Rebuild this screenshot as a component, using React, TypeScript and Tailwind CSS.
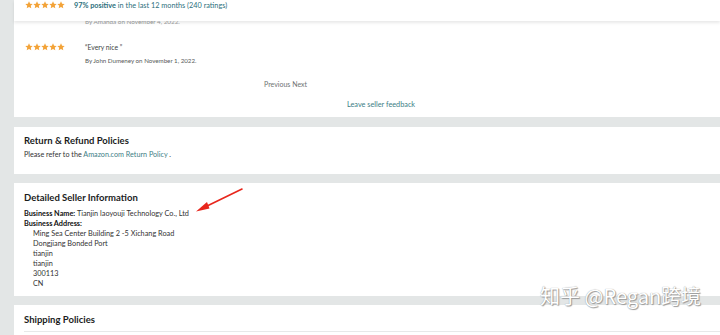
import React from 'react';

const Stars = () => (
    <div className="flex">
        {[0, 1, 2, 3, 4].map(i => (
            <svg key={i} viewBox="0 0 24 24" className="w-[8px] h-[8px]">
                <path
                    d="M12 1l3.3 7.1 7.7.8-5.8 5.2 1.7 7.7L12 17.8l-6.9 4 1.7-7.7L1 8.9l7.7-.8z"
                    fill="#f3a338"
                />
            </svg>
        ))}
    </div>
);

const Card: React.FC<{ className?: string; children: React.ReactNode }> = ({ className, children }) => (
    <div className={`bg-white ${className ?? ''}`}>{children}</div>
);

const address = [
    'Ming Sea Center Building 2 -5 Xichang Road',
    'Dongjiang Bonded Port',
    'tianjin',
    'tianjin',
    '300113',
    'CN',
];

export default function App() {
    return (
        <div
            className="relative w-[720px] h-[335px] overflow-hidden bg-[#e3e6e6] pl-[14px] text-[#0f1111]"
            style={{ fontFamily: 'Lato, "Liberation Sans", sans-serif' }}
        >
            <div className="flex flex-col">
                {/* Feedback card */}
                <Card className="h-[117px] flex flex-col">
                    <div className="relative z-10 h-[21px] flex items-start gap-[9px] pl-[11px] pt-[1px] shadow-[0_2px_3px_rgba(0,0,0,0.09)]">
                        <Stars />
                        <div className="text-[7.3px] leading-[9px] text-[#2c6f7c]">
                            <span className="font-bold">97% positive</span> in the last 12 months (240 ratings)
                        </div>
                    </div>
                    <div className="h-[6px] overflow-hidden pl-[71px]">
                        <div className="-mt-[3px] text-[6.3px] leading-[8px] text-[#9a9d9d]">
                            By Amanda on November 4, 2022.
                        </div>
                    </div>
                    <div className="flex pl-[11px] pt-[15px] gap-[20px]">
                        <div className="pt-[1px]">
                            <Stars />
                        </div>
                        <div>
                            <div className="text-[6.8px] leading-[10px] text-[#3c3f3f]">“Every nice ”</div>
                            <div className="mt-[5px] text-[6.2px] leading-[8px] text-[#565959]">
                                By John Dumeney on November 1, 2022.
                            </div>
                        </div>
                    </div>
                    <div className="pl-[250px] mt-[15px] text-[7px] leading-[9px] text-[#6f7373]">Previous Next</div>
                    <div className="pl-[333px] mt-[11px] text-[7.3px] leading-[9px] text-[#3d7e86]">
                        Leave seller feedback
                    </div>
                </Card>

                {/* Return policy */}
                <Card className="mt-[10px] h-[47px] pl-[10px] pt-[8px]">
                    <div className="text-[9.5px] leading-[12px] font-bold text-[#1b1d1d]">Return &amp; Refund Policies</div>
                    <div className="mt-[3px] text-[7.2px] leading-[9px] text-[#333]">
                        Please refer to the <span className="text-[#3d7e86]">Amazon.com Return Policy</span> .
                    </div>
                </Card>

                {/* Seller info */}
                <Card className="mt-[9px] h-[113px] pl-[10px] pt-[9px]">
                    <div className="text-[9.5px] leading-[12px] font-bold text-[#1b1d1d]">Detailed Seller Information</div>
                    <div className="mt-[5px] text-[7.3px] leading-[10px] text-[#333]">
                        <div>
                            <span className="font-bold text-[#111]">Business Name:</span> Tianjin laoyouji Technology Co., Ltd
                        </div>
                        <div className="font-bold text-[#111]">Business Address:</div>
                        <div className="pl-[9px]">
                            {address.map((line, i) => (
                                <div key={i}>{line}</div>
                            ))}
                        </div>
                    </div>
                </Card>

                {/* Shipping */}
                <Card className="mt-[9px] h-[40px] pl-[10px] pt-[9px]">
                    <div className="text-[9.5px] leading-[12px] font-bold text-[#1b1d1d]">Shipping Policies</div>
                    <div className="mt-[5px] h-[1px] bg-[#e7e9e9]" />
                </Card>
            </div>

            {/* annotation arrow */}
            <svg className="absolute left-0 top-0 w-[720px] h-[335px] pointer-events-none" viewBox="0 0 720 335">
                <line x1="242" y1="189" x2="205" y2="207" stroke="#e8261c" strokeWidth="1.6" strokeLinecap="round" />
                <path d="M196 211.5 L207 202 L209.5 208.5 Z" fill="#e8261c" />
            </svg>

            {/* watermark */}
            <div
                className="absolute left-[540px] top-[284px] text-[20px] leading-[24px] text-white whitespace-nowrap [text-shadow:0_0_1px_#8a8a8a,1px_1px_1px_#9a9a9a]"
                style={{ fontFamily: '"Noto Sans CJK SC", "Noto Sans", sans-serif' }}
            >
                知乎 @Regan跨境
            </div>
        </div>
    );
}
